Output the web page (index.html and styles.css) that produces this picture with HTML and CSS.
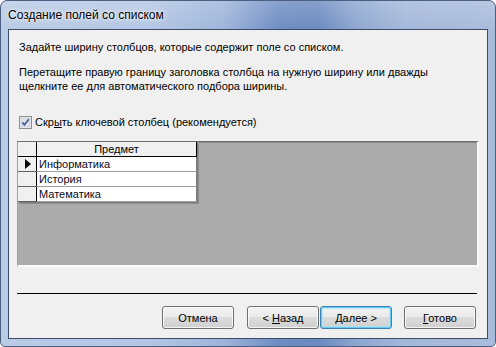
FILE: index.html
```html
<!DOCTYPE html>
<html lang="ru">
<head>
<meta charset="utf-8">
<link rel="stylesheet" href="styles.css">
</head>
<body>
<div class="window">
  <div class="titlebar"><span class="title">Создание полей со списком</span></div>
  <div class="client">
    <p class="line1">Задайте ширину столбцов, которые содержит поле со списком.</p>
    <p class="para2">Перетащите правую границу заголовка столбца на нужную ширину или дважды<br>щелкните ее для автоматического подбора ширины.</p>
    <label class="check-row">
      <span class="checkbox">
        <svg width="13" height="13" viewBox="0 0 13 13">
          <rect x="0.5" y="0.5" width="12" height="12" fill="#f4f4f4" stroke="#8e8f8f"/>
          <rect x="2" y="2" width="9" height="9" fill="#dfe3ea" stroke="#b8bec8" stroke-width="0.6"/>
          <path d="M3.3 6.4 L5.4 8.8 L9.8 3.2" fill="none" stroke="#4a5f97" stroke-width="1.7"/>
        </svg>
      </span>
      <span class="check-label">Скр<u>ы</u>ть ключевой столбец (рекомендуется)</span>
    </label>
    <div class="grid">
      <table class="sheet">
        <tr class="head"><td class="sel"></td><td class="col">Предмет</td></tr>
        <tr><td class="sel"><span class="arrow"></span></td><td class="val">Информатика</td></tr>
        <tr><td class="sel"></td><td class="val">История</td></tr>
        <tr><td class="sel"></td><td class="val">Математика</td></tr>
      </table>
    </div>
    <div class="separator"></div>
    <div class="buttons">
      <button class="btn">Отмена</button>
      <button class="btn back">&lt; <u>Н</u>азад</button>
      <button class="btn default"><u>Д</u>алее &gt;</button>
      <button class="btn finish"><u>Г</u>отово</button>
    </div>
  </div>
</div>
</body>
</html>
```

FILE: styles.css
```css
html, body {
  margin: 0;
  padding: 0;
  background: #ffffff;
}
.window {
  box-sizing: border-box;
  width: 496px;
  height: 347px;
  border: 1px solid #4d5f80;
  border-radius: 7px 7px 5px 5px;
  background:
    linear-gradient(180deg, rgba(255,255,255,0.18) 0%, rgba(255,255,255,0) 30px),
    linear-gradient(90deg, #b9cbe5 0%, #b3c6e3 30%, #9eb4da 45%, #6f8dc3 56%, #6a89c0 64%, #8ea7d0 72%, #a4b8da 82%, #a9bbdb 100%);
  padding: 0 7px 7px 7px;
  display: flex;
  flex-direction: column;
  font-family: "Liberation Sans", Arial, sans-serif;
}
.titlebar {
  height: 28px;
  display: flex;
  align-items: center;
}
.title {
  font-family: "Liberation Sans", Arial, sans-serif;
  font-size: 12px;
  color: #000;
  text-shadow: 0 0 6px rgba(255,255,255,0.9), 0 0 3px rgba(255,255,255,0.9);
  margin-top: 0;
}
.client {
  flex: 1;
  box-sizing: border-box;
  border: 1px solid #3c4d6b;
  background: #f0f0f0;
  display: flex;
  flex-direction: column;
  padding: 10px 0 0 0;
  font-size: 11px;
  color: #000;
}
p {
  margin: 0;
  line-height: 14px;
  padding-left: 10px;
}
.para2 {
  margin-top: 11px;
}
.check-row {
  display: flex;
  align-items: center;
  margin-top: 22px;
  margin-left: 10px;
  height: 14px;
}
.checkbox {
  width: 13px;
  height: 13px;
  display: block;
}
.checkbox svg { display: block; }
.check-label {
  margin-left: 3px;
}
.grid {
  box-sizing: border-box;
  margin: 12px 0 0 8px;
  width: 462px;
  height: 126px;
  background: #ababab;
  border-top: 1px solid #6e6e6e;
  border-left: 1px solid #a0a0a0;
  border-right: 2px solid #fbfbfb;
  border-bottom: 2px solid #fbfbfb;
  box-shadow: inset 0 1px 0 #8a8a8a;
}
.sheet {
  border-collapse: collapse;
  border-spacing: 0;
  box-shadow: 1px 1px 0 #7c7c7c, 2px 2px 0 #8e8e8e;
}
.sheet td {
  height: 14px;
  padding: 0;
  line-height: 14px;
  font-size: 11px;
  background: #fff;
  border-bottom: 1px solid #a0a0a0;
  border-right: 1px solid #808080;
}
.sheet td.sel {
  width: 18px;
  background: #f0f0f0;
  border-right: 1px solid #000;
  border-bottom: 1px solid #606060;
}
.sheet tr.head td {
  background: #f0f0f0;
  border-bottom: 1px solid #000;
  border-right: 1px solid #000;
}
.sheet td.col {
  width: 159px;
  text-align: center;
}
.sheet td.val {
  padding-left: 2px;
  color: #0a0a1e;
}
.arrow {
  display: block;
  width: 0;
  height: 0;
  margin-left: 7px;
  border-top: 5px solid transparent;
  border-bottom: 5px solid transparent;
  border-left: 6px solid #000;
}
.separator {
  margin: 26px 0 0 8px;
  width: 460px;
  height: 1px;
  background: #000;
}
.buttons {
  display: flex;
  margin-top: 12px;
  padding-left: 153px;
}
.btn {
  box-sizing: border-box;
  width: 72px;
  height: 23px;
  padding: 0;
  font-family: "Liberation Sans", Arial, sans-serif;
  font-size: 11px;
  color: #000;
  border: 1px solid #707070;
  border-radius: 3px;
  background: linear-gradient(180deg, #f2f2f2 0%, #ebebeb 45%, #dddddd 50%, #cfcfcf 100%);
  box-shadow: inset 0 0 0 1px rgba(255,255,255,0.75);
}
.btn.back { margin-left: 13px; }
.btn.default {
  margin-left: 1px;
  border-color: #3c7fb1;
  box-shadow: inset 0 0 0 1px #62cdf6, inset 0 0 0 2px rgba(170,228,250,0.7);
}
.btn.finish { margin-left: 12px; }
```
